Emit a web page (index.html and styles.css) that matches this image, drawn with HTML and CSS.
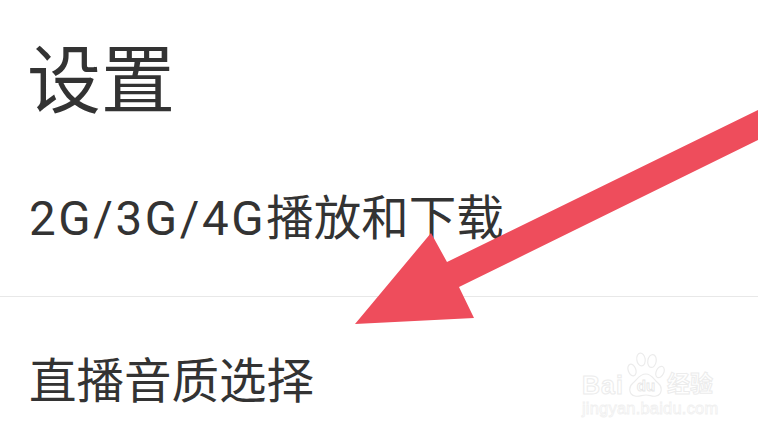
FILE: index.html
```html
<!DOCTYPE html>
<html lang="zh">
<head>
<meta charset="utf-8">
<title>设置</title>
<link rel="stylesheet" href="styles.css">
</head>
<body>
<main class="page">
  <h1 class="title">设置</h1>
  <div class="row row-first"><span class="latin">2G/3G/4G</span>播放和下载</div>
  <div class="row row-second">直播音质选择</div>
</main>
<svg class="arrow" viewBox="0 0 758 433" aria-hidden="true">
  <polygon points="758,110 758,140 459,287 474,318 355,324 431,233 447,262"/>
</svg>
<div class="mark">
  <div class="mark-top">
    <span class="mark-bai">Bai</span>
    <svg class="paw" viewBox="0 0 38 45" aria-hidden="true">
      <ellipse cx="5" cy="18" rx="3.8" ry="6" transform="rotate(-20 5 18)"/>
      <ellipse cx="14" cy="7.5" rx="4.2" ry="6.5" transform="rotate(-8 14 7.5)"/>
      <ellipse cx="25" cy="9" rx="4.2" ry="6.5" transform="rotate(10 25 9)"/>
      <ellipse cx="33" cy="20" rx="3.8" ry="6" transform="rotate(25 33 20)"/>
      <path d="M8 44c-6-1-7-9-2-13 4-3 6-9 13-9 6 0 8 6 12 9 5 4 4 12-2 13-4 1-6-1-10-1s-7 2-11 1z"/>
      <text class="paw-du" x="19" y="39">du</text>
    </svg>
    <span class="mark-cn">经验</span>
  </div>
  <div class="mark-url">jingyan.baidu.com</div>
</div>
</body>
</html>
```
FILE: styles.css
```css
html, body { margin: 0; padding: 0; }
body { width: 758px; height: 433px; overflow: hidden; background: #fff; position: relative; font-family: "Liberation Sans", "Noto Sans CJK SC", sans-serif; color: #333; }
.page { display: flex; flex-direction: column; }
.title { margin: 0; padding: 35px 0 0 27px; font-size: 74px; line-height: 80px; font-weight: 400; font-family: "Noto Sans CJK SC", sans-serif; }
.row { padding-left: 29px; font-size: 47.5px; line-height: 60px; font-family: "Roboto", "Noto Sans CJK SC", sans-serif; font-weight: 400; white-space: nowrap; }
.latin { letter-spacing: 2.6px; }
.row-first { padding-top: 74px; padding-bottom: 47px; border-bottom: 1px solid #e8e8e8; height: 60px; }
.row-second { padding-top: 55px; }
.arrow { position: absolute; left: 0; top: 0; width: 758px; height: 433px; }
.arrow polygon { fill: #ee4d5c; }
.mark { position: absolute; left: 582px; top: 351px; width: 140px; color: #fff; }
.mark-top { display: flex; align-items: flex-end; height: 46px; }
.mark-bai { font-size: 25px; font-weight: 700; line-height: 30px; margin-right: 3px; margin-bottom: -3px; letter-spacing: 1px; color: #fff; -webkit-text-stroke: 1px #ececec; }
.paw { width: 38px; height: 45px; flex: none; }
.paw ellipse, .paw path { fill: #fff; stroke: #ececec; stroke-width: 1.2; }
.paw-du { font-size: 15px; font-weight: 700; text-anchor: middle; fill: #fff; stroke: #e6e6e6; stroke-width: 0.8; }
.mark-cn { font-size: 23px; line-height: 30px; margin-left: 2px; margin-bottom: -2px; font-weight: 700; color: #fff; -webkit-text-stroke: 1px #ececec; white-space: nowrap; }
.mark-url { font-size: 16.5px; line-height: 20px; margin-top: 1px; letter-spacing: 0.2px; color: #fff; -webkit-text-stroke: 0.8px #f0f0f0; white-space: nowrap; }
```
